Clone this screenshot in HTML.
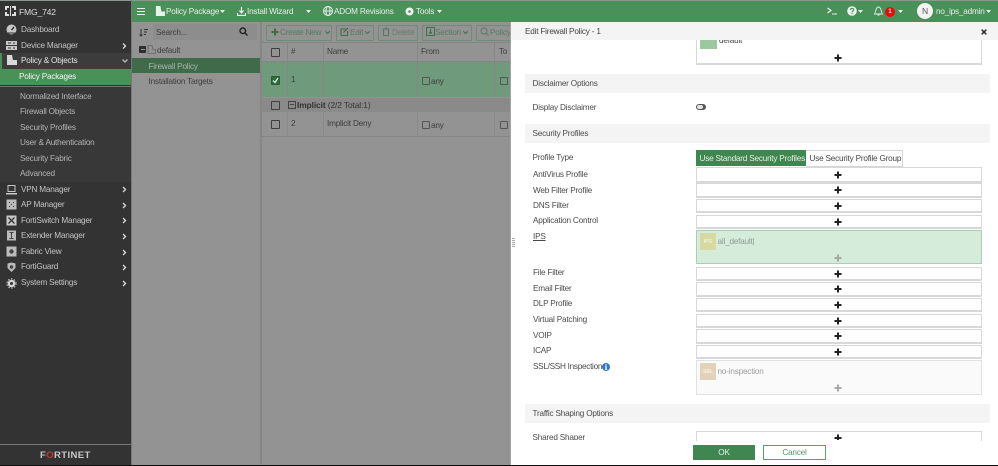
<!DOCTYPE html>
<html><head><meta charset="utf-8"><style>
html,body{margin:0;padding:0;background:#fff}
#p{position:relative;width:998px;height:466px;overflow:hidden;background:#939393;font-family:"Liberation Sans",sans-serif;font-size:8.2px;letter-spacing:-.2px;color:#3a3a3a;filter:blur(.3px)}
#p div,#p span,#p svg{position:absolute}
.t{white-space:nowrap;line-height:12px;margin-top:.7px}
.s{color:#c4c4c4;left:21px}
.sub{color:#b4b4b4;left:20px}
.i{left:6px;width:11px;height:11px}
.w{color:#e6efe8}
.l{left:533px;color:#4a4a4a}
.b{left:696px;width:284px;background:#fff;border:1px solid #d8d8d8;border-bottom-width:2px;box-sizing:content-box}
.pl{left:834px;width:8px;height:8px}
.sec{left:525px;width:465px;height:19px;background:#f4f4f4}
.cb{width:7px;height:7px;border:1px solid #3f3f3f;border-radius:1px}
.tb{top:25px;height:14px;border:1px solid #6e8c76;border-radius:1px}
.g{color:#3d3d3d}
</style></head><body><div id="p">
<svg width="0" height="0" style="position:absolute"><defs><symbol id="pl" viewBox="0 0 8 8"><path d="M4 0.5V7.500M0.5 4H7.500" stroke="currentColor" stroke-width="2"/></symbol></defs></svg>

<!-- sidebar -->
<div style="left:0;top:0;width:131px;height:466px;background:#333"></div>
<div style="left:0;top:0;width:998px;height:1px;background:#8a9a8e"></div>
<div style="left:0;top:86px;width:131px;height:1px;background:#777"></div>
<div style="left:0;top:87px;width:131px;height:95px;background:#383838"></div>
<div style="left:0;top:53px;width:131px;height:16px;background:#3c3c3c"></div>
<div style="left:0;top:53px;width:2px;height:16px;background:#4a8f59"></div>
<div style="left:0;top:69px;width:131px;height:16px;background:#4a9158"></div>
<div style="left:131px;top:0;width:1px;height:466px;background:#777"></div>

<svg style="left:5px;top:6px" width="11" height="10"><path d="M0 0h4v2h-2v2h-2zM7 0h4v4h-2v-2h-2zM0 6h2v2h2v2h-4zM9 6h2v4h-4v-2h2z M5 0h1v10h-1z" fill="#ddd"/></svg>
<span class="t" style="left:19px;top:5px;color:#dedede;font-size:8.600px">FMG_742</span>

<svg class="i" style="top:24px" viewBox="0 0 11 11"><circle cx="5.500" cy="5.500" r="5" fill="#c8c8c8"/><path d="M5.500 6L8 3" stroke="#333" stroke-width="1.400"/><path d="M2 9h7" stroke="#333"/></svg>
<span class="t s" style="top:23.500px">Dashboard</span>
<svg class="i" style="top:40px" viewBox="0 0 11 11"><path d="M0 1h11v4h-11zM0 6h11v4h-11z" fill="#c8c8c8"/><path d="M2 3h3M7 3h2M2 8h3M7 8h2" stroke="#333"/></svg>
<span class="t s" style="top:39px">Device Manager</span>
<svg class="i" style="top:55px" viewBox="0 0 11 11"><path d="M1 0h5l1 5h4v5h-10z" fill="#d8d8d8"/></svg>
<span class="t" style="left:21px;top:54.500px;color:#e4e4e4">Policy &amp; Objects</span>
<span class="t" style="left:19px;top:70px;color:#f2f7f3">Policy Packages</span>
<span class="t sub" style="top:90px">Normalized Interface</span>
<span class="t sub" style="top:105.500px">Firewall Objects</span>
<span class="t sub" style="top:121px">Security Profiles</span>
<span class="t sub" style="top:136.500px">User &amp; Authentication</span>
<span class="t sub" style="top:152px">Security Fabric</span>
<span class="t sub" style="top:167.500px">Advanced</span>

<svg class="i" style="top:184px" viewBox="0 0 11 11"><path d="M2 1.500h7v6h-7z" fill="none" stroke="#c8c8c8"/><path d="M0 9h11v1.500h-11z" fill="#c8c8c8"/></svg>
<span class="t s" style="top:183px">VPN Manager</span>
<svg class="i" style="top:199px" viewBox="0 0 11 11"><rect width="10" height="10" x=".5" y=".5" fill="#bbb"/><path d="M3 3h1v1h-1zM7 3h1v1h-1zM3 7h1v1h-1zM7 7h1v1h-1zM5 5h1v1h-1z" fill="#333"/></svg>
<span class="t s" style="top:198.500px">AP Manager</span>
<svg class="i" style="top:215px" viewBox="0 0 11 11"><rect width="10" height="10" x=".5" y=".5" fill="#c8c8c8"/><path d="M2.500 2.500l6 6M8.500 2.500l-6 6" stroke="#333" stroke-width="1.300"/></svg>
<span class="t s" style="top:214px">FortiSwitch Manager</span>
<svg class="i" style="top:230px" viewBox="0 0 11 11"><rect width="9" height="10" x="1" y=".5" fill="#bbb"/><path d="M3.500 2.500h4M5.500 2.500v6M3.500 8.500h4" stroke="#444"/></svg>
<span class="t s" style="top:229.500px">Extender Manager</span>
<svg class="i" style="top:246px" viewBox="0 0 11 11"><rect width="10" height="10" x=".5" y=".5" fill="#bbb"/><circle cx="5.500" cy="5.500" r="2.200" fill="#444"/></svg>
<span class="t s" style="top:245px">Fabric View</span>
<svg class="i" style="top:262px" viewBox="0 0 11 11"><path d="M1.500 1.500L5.500 .5L9.500 1.500V6L5.500 10L1.500 6z" fill="#bbb"/><circle cx="5.500" cy="5" r="1.700" fill="#444"/></svg>
<span class="t s" style="top:260.500px">FortiGuard</span>
<svg class="i" style="top:278px" viewBox="0 0 11 11"><circle cx="5.500" cy="5.500" r="3.800" fill="#d4d4d4"/><circle cx="5.500" cy="5.500" r="4.600" fill="none" stroke="#d4d4d4" stroke-dasharray="1.500 1.500"/><circle cx="5.500" cy="5.500" r="1.500" fill="#333"/></svg>
<span class="t s" style="top:276.500px">System Settings</span>

<svg style="left:122px;top:43px" width="5" height="248" fill="none" stroke="#d4d4d4" stroke-width="1.400"><path d="M1 .5L3.500 3L1 5.500M1 144L3.500 146.500L1 149M1 160L3.500 162.500L1 165M1 175L3.500 177.500L1 180M1 191L3.500 193.500L1 196M1 207L3.500 209.500L1 212M1 222L3.500 224.500L1 227M1 238L3.500 240.500L1 243"/></svg>
<svg style="left:122px;top:59px" width="6" height="4" fill="none" stroke="#bbb" stroke-width="1.300"><path d="M.5 .5L3 3L5.500 .5"/></svg>

<div style="left:0;top:444px;width:131px;height:1px;background:#777"></div>
<span class="t" style="left:40px;top:449px;font-size:9.500px;font-weight:bold;color:#c9c9c9;letter-spacing:.4px">F<span style="position:static;color:#c63a2e">O</span>RTINET</span>
<div style="left:0;top:464.500px;width:998px;height:2px;background:#0c0c0c"></div>

<!-- top bar -->
<div style="left:132px;top:1px;width:866px;height:21px;background:#4a9159"></div>
<svg style="left:137px;top:8px" width="8" height="7"><path d="M0 .5h8M0 3.500h8M0 6.500h8" stroke="#e8f0ea"/></svg>
<svg style="left:155px;top:6px" width="10" height="10" viewBox="0 0 11 11"><path d="M1 0h5l1 6h4v5h-10z" fill="#e8f0ea"/></svg>
<span class="t w" style="left:166px;top:5px">Policy Package</span>
<svg style="left:220px;top:10px" width="5" height="3"><path d="M0 0h5L2.500 3z" fill="#e8f0ea"/></svg>
<svg style="left:237px;top:7px" width="9" height="9"><path d="M4.500 0v5M2.500 3.500L4.500 6L6.500 3.500M.5 6v2.500h8V6" stroke="#e8f0ea" fill="none" stroke-width="1.200"/></svg>
<span class="t w" style="left:247px;top:5px">Install Wizard</span>
<svg style="left:306px;top:10px" width="5" height="3"><path d="M0 0h5L2.500 3z" fill="#e8f0ea"/></svg>
<svg style="left:323px;top:6px" width="10" height="10" viewBox="0 0 10 10" fill="none" stroke="#e8f0ea"><circle cx="5" cy="5" r="4.500"/><ellipse cx="5" cy="5" rx="2" ry="4.500"/><path d="M.5 5h9"/></svg>
<span class="t w" style="left:334px;top:5px">ADOM Revisions</span>
<svg style="left:405px;top:7px" width="9" height="9" viewBox="0 0 9 9"><circle cx="4.500" cy="4.500" r="4" fill="#eef3ef"/><circle cx="4.500" cy="4.500" r="1.300" fill="#4a9159"/></svg>
<span class="t w" style="left:416px;top:5px">Tools</span>
<svg style="left:437px;top:10px" width="5" height="3"><path d="M0 0h5L2.500 3z" fill="#e8f0ea"/></svg>

<svg style="left:827px;top:7px" width="11" height="8" fill="none" stroke="#eef3ef" stroke-width="1.100"><path d="M.5 1L4 3.500L.5 6M5 7h5"/></svg>
<svg style="left:847px;top:6px" width="10" height="10"><circle cx="5" cy="5" r="4.800" fill="#eef3ef"/><path d="M3.400 3.900C3.500 2 6.700 2 6.700 3.800C6.700 5 5 4.900 5 6.200" stroke="#4a9159" stroke-width="1.200" fill="none"/><path d="M4.400 7h1.200v1.200h-1.200z" fill="#4a9159"/></svg>
<svg style="left:858px;top:10px" width="5" height="3"><path d="M0 0h5L2.500 3z" fill="#e8f0ea"/></svg>
<svg style="left:874px;top:6px" width="9" height="10" fill="none" stroke="#dfeae2" stroke-width=".9"><path d="M.5 8h8C7 6.500 7.500 1 4.500 1S2 6.500 .5 8zM3.500 9h2"/></svg>
<div style="left:885px;top:7px;width:10px;height:10px;border-radius:50%;background:#ea0a0a"></div>
<span class="t" style="left:885px;top:5.500px;width:10px;text-align:center;color:#f3d6d6;font-size:6.500px;font-weight:bold">1</span>
<svg style="left:898px;top:10px" width="5" height="3"><path d="M0 0h5L2.500 3z" fill="#e8f0ea"/></svg>
<div style="left:917px;top:3px;width:16px;height:16px;border-radius:50%;background:#f3f3f3"></div>
<span class="t" style="left:917px;top:4.500px;width:16px;text-align:center;color:#555;font-size:8.500px">N</span>
<span class="t w" style="left:936px;top:5px">no_ips_admin</span>
<svg style="left:986px;top:10px" width="5" height="3"><path d="M0 0h5L2.500 3z" fill="#e8f0ea"/></svg>

<!-- tree -->
<svg style="left:139px;top:28px" width="9" height="9" fill="none" stroke="#333" stroke-width="1"><path d="M2 1v7M.5 6.500L2 8L3.500 6.500M5 1.500h4M5 4h3M5 6.500h2"/></svg>
<div style="left:153px;top:24px;width:104px;height:16px;background:#8d8d8d"></div>
<span class="t g" style="left:156px;top:26px">Search...</span>
<svg style="left:239px;top:27px" width="9" height="9" fill="none" stroke="#222" stroke-width="1.400"><circle cx="3.800" cy="3.800" r="2.800"/><path d="M6 6l2.500 2.500"/></svg>
<div style="left:139px;top:46px;width:7px;height:7px;background:#2f2f2f;border-radius:1px"></div>
<div style="left:140.500px;top:49px;width:4px;height:1px;background:#999"></div>
<svg style="left:147px;top:45px" width="9" height="9" fill="none" stroke="#666" stroke-width=".8"><path d="M1 8.500V.5h4l1 4h2.500v4z"/></svg>
<span class="t g" style="left:157px;top:44px">default</span>
<div style="left:132px;top:58px;width:128px;height:15px;background:#3f6b4a"></div>
<span class="t" style="left:148.500px;top:60px;color:#a9b5ab">Firewall Policy</span>
<span class="t g" style="left:148.500px;top:75.500px">Installation Targets</span>
<div style="left:260px;top:22px;width:2px;height:442px;background:#868686"></div>

<!-- main toolbar -->
<div class="tb" style="left:266px;width:64px"></div>
<svg style="left:271px;top:28px" width="8" height="8"><path d="M4 .5V7.500M.5 4H7.500" stroke="#3c6e48" stroke-width="2"/></svg>
<span class="t" style="left:280px;top:26px;color:#567a5f">Create New</span>
<svg style="left:325px;top:31px" width="5" height="3" fill="none" stroke="#3c6e48"><path d="M.3 .3L2.500 2.500L4.700 .3"/></svg>
<div class="tb" style="left:336px;width:36px"></div>
<svg style="left:340px;top:27px" width="9" height="9" fill="none" stroke="#3c6e48" stroke-width="1.100"><path d="M7 2H1v6.500h6.500V4M3.500 5.500L8 1"/></svg>
<span class="t" style="left:350px;top:26px;color:#567a5f">Edit</span>
<svg style="left:365px;top:31px" width="5" height="3" fill="none" stroke="#3c6e48"><path d="M.3 .3L2.500 2.500L4.700 .3"/></svg>
<div class="tb" style="left:378px;width:38px"></div>
<svg style="left:382px;top:27px" width="8" height="9" fill="none" stroke="#567a5f"><path d="M.5 2h7M1.500 2v6.500h5V2M3 1h2"/></svg>
<span class="t" style="left:392px;top:26px;color:#667f6c">Delete</span>
<div class="tb" style="left:422px;width:48px"></div>
<svg style="left:426px;top:27px" width="9" height="9" fill="none" stroke="#3c6e48"><path d="M.5 .5h8v8h-8zM4.500 2v4M3 5l1.500 1.500L6 5"/></svg>
<span class="t" style="left:435px;top:26px;color:#567a5f">Section</span>
<svg style="left:463px;top:31px" width="5" height="3" fill="none" stroke="#3c6e48"><path d="M.3 .3L2.500 2.500L4.700 .3"/></svg>
<div class="tb" style="left:476px;width:40px"></div>
<svg style="left:480px;top:27px" width="9" height="9" fill="none" stroke="#567a5f"><circle cx="4" cy="4" r="3"/><path d="M6 6l2.500 2.500"/></svg>
<span class="t" style="left:490px;top:26px;color:#567a5f">Policy</span>

<!-- table -->
<div style="left:262px;top:42px;width:250px;height:1px;background:#858585"></div>
<div style="left:262px;top:61px;width:250px;height:1px;background:#858585"></div>
<div style="left:262px;top:62px;width:250px;height:35px;background:#6f9a7b"></div>
<div style="left:262px;top:98px;width:250px;height:14px;background:#8a8a8a"></div>
<div style="left:262px;top:136px;width:250px;height:1px;background:#858585"></div>
<div style="left:287px;top:43px;width:1px;height:54px;background:#868686"></div>
<div style="left:323px;top:43px;width:1px;height:54px;background:#868686"></div>
<div style="left:417px;top:43px;width:1px;height:54px;background:#868686"></div>
<div style="left:494px;top:43px;width:1px;height:54px;background:#868686"></div>
<div style="left:287px;top:112px;width:1px;height:24px;background:#8a8a8a"></div>
<div style="left:323px;top:112px;width:1px;height:24px;background:#8a8a8a"></div>
<div style="left:417px;top:112px;width:1px;height:24px;background:#8a8a8a"></div>
<div style="left:494px;top:112px;width:1px;height:24px;background:#8a8a8a"></div>
<div class="cb" style="left:271px;top:48px"></div>
<span class="t g" style="left:291px;top:45px">#</span>
<span class="t g" style="left:327px;top:45px">Name</span>
<span class="t g" style="left:421px;top:45px">From</span>
<span class="t g" style="left:499px;top:45px">To</span>
<div class="cb" style="left:271px;top:76px;background:#2f6b3d;border-color:#2f5a38"></div>
<svg style="left:272px;top:77px" width="7" height="7" fill="none" stroke="#dfe" stroke-width="1.200"><path d="M1 3.500L3 5.500L6 1"/></svg>
<span class="t g" style="left:291px;top:73px">1</span>
<div class="cb" style="left:422px;top:77px;border-color:#555;width:6px;height:6px"></div>
<span class="t g" style="left:431px;top:75px">any</span>
<div class="cb" style="left:500px;top:77px;border-color:#555;width:6px;height:6px"></div>
<div class="cb" style="left:271px;top:101px"></div>
<div style="left:288px;top:101px;width:6px;height:6px;border:1px solid #444"></div>
<div style="left:290px;top:104px;width:4px;height:1px;background:#444"></div>
<span class="t" style="left:297px;top:98px;color:#333;font-weight:bold;font-size:8.400px;letter-spacing:-.1px">Implicit <span style="position:static;font-weight:normal">(2/2 Total:1)</span></span>
<div class="cb" style="left:271px;top:120px"></div>
<span class="t g" style="left:291px;top:117px">2</span>
<span class="t g" style="left:327px;top:117px">Implicit Deny</span>
<div class="cb" style="left:422px;top:121px;border-color:#555;width:6px;height:6px"></div>
<span class="t g" style="left:431px;top:119px">any</span>
<div class="cb" style="left:500px;top:121px;border-color:#555;width:6px;height:6px"></div>

<!-- modal -->
<div style="left:510px;top:22px;width:488px;height:442.500px;background:#fff;border-left:1px solid #a5a5a5;box-sizing:border-box"></div>
<div style="left:511px;top:22px;width:487px;height:18px;background:#f4f4f4"></div>
<span class="t" style="left:525px;top:25px;color:#444">Edit Firewall Policy - 1</span>
<svg style="left:981px;top:29px" width="6" height="6"><path d="M.7 .7L5.300 5.300M5.300 .7L.7 5.300" stroke="#333" stroke-width="1.600"/></svg>
<svg style="left:512px;top:238px" width="3" height="9"><path d="M0 .5h3M0 2.500h3M0 4.500h3M0 6.500h3M0 8.500h3" stroke="#aaa"/></svg>

<div style="left:696px;top:40px;width:284px;height:23px;background:#fff;border:1px solid #d8d8d8;border-top:0;border-bottom-width:2px"></div>
<span class="t" style="left:719px;top:34px;color:#444;clip-path:inset(5.300px 0 0 0)">default</span>
<div style="left:700px;top:40px;width:17px;height:9px;background:#9cc79f"></div>
<svg class="pl" style="top:54px;color:#222"><use href="#pl"/></svg>

<div class="sec" style="top:74px"></div>
<span class="t l" style="top:77px;left:532.500px">Disclaimer Options</span>
<span class="t l" style="top:101px;left:532.500px">Display Disclaimer</span>
<div style="left:696px;top:104px;width:10px;height:5.500px;border-radius:3px;background:#555"></div>
<div style="left:696.500px;top:104.500px;width:6px;height:4.500px;border-radius:3px;background:#e4e4e4"></div>
<div class="sec" style="top:124px"></div>
<span class="t l" style="top:127px;left:532.500px">Security Profiles</span>
<span class="t l" style="top:151px;left:532.500px">Profile Type</span>
<div style="left:806px;top:150px;width:96px;height:14.500px;border:1px solid #d5d5d5;border-left:0"></div>
<div style="left:696px;top:150px;width:110px;height:15.500px;background:#3f8650"></div>
<span class="t" style="left:699.500px;top:152px;color:#e6f0e8">Use Standard Security Profiles</span>
<span class="t" style="left:809.500px;top:152px;color:#444">Use Security Profile Group</span>

<div class="b" style="top:167px;height:12.500px"></div><svg class="pl" style="top:171px;color:#222"><use href="#pl"/></svg>
<span class="t l" style="top:168px">AntiVirus Profile</span>
<div class="b" style="top:183px;height:11.500px"></div><svg class="pl" style="top:186px;color:#222"><use href="#pl"/></svg>
<span class="t l" style="top:184px">Web Filter Profile</span>
<div class="b" style="top:198.500px;height:11.500px"></div><svg class="pl" style="top:202px;color:#222"><use href="#pl"/></svg>
<span class="t l" style="top:199px">DNS Filter</span>
<div class="b" style="top:214.500px;height:11.500px"></div><svg class="pl" style="top:217.500px;color:#222"><use href="#pl"/></svg>
<span class="t l" style="top:214.500px">Application Control</span>

<span class="t l" style="top:230.500px;text-decoration:underline">IPS</span>
<div style="left:696px;top:230px;width:286px;height:34px;background:#d6ecda;border:1px solid #a9d0b0;box-sizing:border-box"></div>
<div style="left:700px;top:232.500px;width:16px;height:17px;background:#d6d9a0"></div>
<span class="t" style="left:700px;top:235px;width:16px;text-align:center;font-size:5.500px;font-weight:bold;color:#eef0d4">IPS</span>
<span class="t" style="left:717.500px;top:235px;color:#8f9a91">all_default<span style="position:static;color:#999">|</span></span>
<svg class="pl" style="top:253.500px;color:#a2aca4"><use href="#pl"/></svg>

<div class="b" style="top:266.500px;height:11.500px"></div><svg class="pl" style="top:269.500px;color:#222"><use href="#pl"/></svg>
<span class="t l" style="top:266.500px">File Filter</span>
<div class="b" style="top:282px;height:11.500px"></div><svg class="pl" style="top:285px;color:#222"><use href="#pl"/></svg>
<span class="t l" style="top:282px">Email Filter</span>
<div class="b" style="top:297.500px;height:11.500px"></div><svg class="pl" style="top:301px;color:#222"><use href="#pl"/></svg>
<span class="t l" style="top:297.500px">DLP Profile</span>
<div class="b" style="top:313.500px;height:11.500px"></div><svg class="pl" style="top:316.500px;color:#222"><use href="#pl"/></svg>
<span class="t l" style="top:313px">Virtual Patching</span>
<div class="b" style="top:329px;height:11.500px"></div><svg class="pl" style="top:332px;color:#222"><use href="#pl"/></svg>
<span class="t l" style="top:329px">VOIP</span>
<div class="b" style="top:344.500px;height:11.500px"></div><svg class="pl" style="top:347.500px;color:#222"><use href="#pl"/></svg>
<span class="t l" style="top:344.500px">ICAP</span>

<span class="t l" style="top:360.500px;letter-spacing:-.28px">SSL/SSH Inspection</span>
<svg style="left:602px;top:362.500px" width="8" height="8"><circle cx="4" cy="4" r="4" fill="#2f76c9"/><path d="M3.300 1.400h1.400v1.200h-1.400zM3 3.300h1.700v2.700h.6v.8h-2.500v-.8h.6v-1.900h-.4z" fill="#fff"/></svg>
<div style="left:696px;top:360px;width:286px;height:34.500px;background:#fafafa;border:1px solid #e2e2e2;box-sizing:border-box"></div>
<div style="left:700px;top:363px;width:16px;height:16.500px;background:#e2d3b8"></div>
<span class="t" style="left:700px;top:365px;width:16px;text-align:center;font-size:5.500px;font-weight:bold;color:#f5eee0">SSL</span>
<span class="t" style="left:717.500px;top:365px;color:#9b9b9b">no-inspection</span>
<svg class="pl" style="top:384px;color:#a8a8a8"><use href="#pl"/></svg>

<div class="sec" style="top:404px"></div>
<span class="t l" style="top:407px;left:532.500px">Traffic Shaping Options</span>

<span class="t l" style="top:431px;left:532.500px;height:8px;overflow:hidden">Shared Shaper</span>
<div style="left:696px;top:431px;width:284px;height:9px;border:1px solid #d8d8d8;border-bottom:0"></div>
<svg class="pl" style="top:434px;height:6px;width:8px" viewBox="0 0 8 6"><path d="M4 .5V6M.5 4H7.500" stroke="#222" stroke-width="2"/></svg>

<div style="left:693px;top:445px;width:62px;height:15px;background:#3f8650"></div>
<span class="t" style="left:693px;top:446px;width:62px;text-align:center;color:#e8f1ea">OK</span>
<div style="left:763px;top:445px;width:61px;height:13px;border:1px solid #5b9e6c"></div>
<span class="t" style="left:763px;top:446px;width:63px;text-align:center;color:#4f9a63">Cancel</span>
</div></body></html>
